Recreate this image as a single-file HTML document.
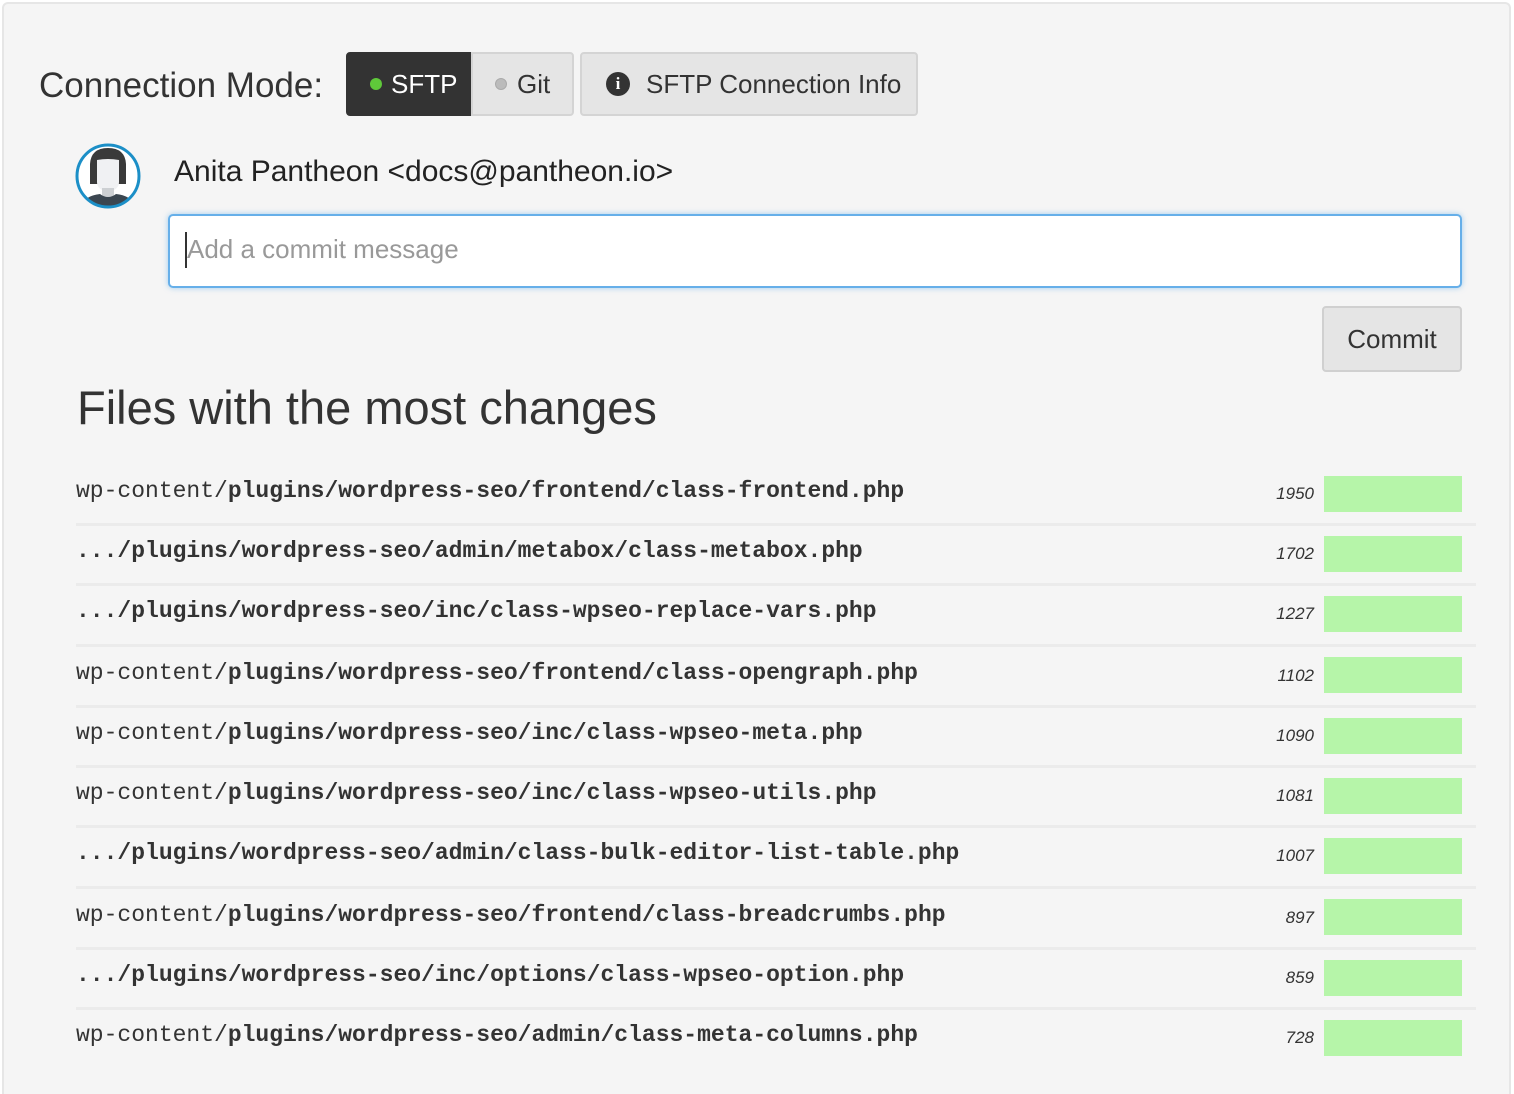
<!DOCTYPE html>
<html style="overflow:hidden;height:1094px"><head><meta charset="utf-8"><style>
*{margin:0;padding:0;box-sizing:border-box}
body{width:1514px;height:1094px;background:#fff;font-family:"Liberation Sans",sans-serif;color:#333;position:relative;overflow:hidden}
.frame{position:absolute;left:2px;top:2px;width:1509px;height:1092px;background:#f5f5f5;border:2px solid #e6e6e6;border-bottom:none;border-radius:6px 6px 0 0}
.a{position:absolute;white-space:nowrap}
.btn{position:absolute;top:52px;height:64px;border:2px solid #d4d4d4;background:#e5e5e5;font-size:26px;color:#333;display:flex;align-items:center}
.mono{font-family:"Liberation Mono",monospace;font-size:23px;color:#333}
.mono b{font-weight:bold}
.num{position:absolute;right:200px;font-style:italic;font-size:17px;color:#333}
.bar{position:absolute;left:1324px;width:138px;height:36px;background:#b6f5a9}
.sep{position:absolute;left:76px;width:1400px;height:3px;background:#ebebeb}
</style></head><body>
<div class="frame"></div>
<div class="a" style="left:39px;top:66px;font-size:35px;color:#333">Connection Mode:</div>
<div class="btn" style="left:346px;width:126px;background:#333;border-color:#333;color:#fff;border-radius:4px 0 0 4px;padding-left:22px"><span style="display:inline-block;width:12px;height:12px;border-radius:50%;background:#5fc93a;margin-right:9px"></span>SFTP</div>
<div class="btn" style="left:471px;width:103px;border-radius:0 4px 4px 0;padding-left:22px"><span style="display:inline-block;width:12px;height:12px;border-radius:50%;background:#bbb;border:1px solid #aaa;margin-right:10px"></span>Git</div>
<div class="btn" style="left:580px;width:338px;border-radius:4px;padding-left:24px"><span style="display:inline-block;width:24px;height:24px;border-radius:50%;background:#333;color:#fff;font-size:17px;font-weight:bold;text-align:center;line-height:24px;margin-right:16px;font-family:'Liberation Serif',serif">i</span>SFTP Connection Info</div>
<svg class="a" style="left:74px;top:142px" width="68" height="68" viewBox="0 0 68 68">
<defs><clipPath id="c"><circle cx="34" cy="34" r="31"/></clipPath></defs>
<circle cx="34" cy="34" r="31" fill="#fff"/>
<g clip-path="url(#c)">
<path d="M16 42 L16 22 Q17 6 34 6 Q51 6 52 22 L52 42 Z" fill="#3a3a3a"/>
<path d="M23 18 Q34 16 45 18 L45 40 Q45 48 34 50 Q23 48 23 40 Z" fill="#f0f1f3"/>
<rect x="28" y="46" width="12" height="10" fill="#cdd0d3"/>
<path d="M6 68 Q8 54 26 52 Q34 58 42 52 Q60 54 62 68 Z" fill="#3b4650"/>
</g>
<circle cx="34" cy="34" r="31" fill="none" stroke="#1c8fc7" stroke-width="3"/>
</svg>
<div class="a" style="left:174px;top:155px;font-size:30px;color:#222">Anita Pantheon &lt;docs@pantheon.io&gt;</div>
<div class="a" style="left:168px;top:214px;width:1294px;height:74px;background:#fff;border:2px solid #66afe9;border-radius:5px;box-shadow:0 0 6px rgba(102,175,233,.6)"></div>
<div class="a" style="left:185px;top:232px;width:2px;height:36px;background:#333"></div>
<div class="a" style="left:187px;top:234px;font-size:26px;color:#999">Add a commit message</div>
<div class="a" style="left:1322px;top:306px;width:140px;height:66px;background:#e5e5e5;border:2px solid #d0d0d0;border-radius:4px;font-size:26px;color:#333;text-align:center;line-height:62px">Commit</div>
<div class="a" style="left:77px;top:380px;font-size:47px;color:#333">Files with the most changes</div>

<div class="a mono" style="left:76px;top:478px">wp-content/<b>plugins/wordpress-seo/frontend/class-frontend.php</b></div>
<div class="num" style="top:484px">1950</div><div class="bar" style="top:476px"></div><div class="sep" style="top:523px"></div>

<div class="a mono" style="left:76px;top:538px"><b>.../plugins/wordpress-seo/admin/metabox/class-metabox.php</b></div>
<div class="num" style="top:544px">1702</div><div class="bar" style="top:536px"></div><div class="sep" style="top:583px"></div>

<div class="a mono" style="left:76px;top:598px"><b>.../plugins/wordpress-seo/inc/class-wpseo-replace-vars.php</b></div>
<div class="num" style="top:604px">1227</div><div class="bar" style="top:596px"></div><div class="sep" style="top:644px"></div>

<div class="a mono" style="left:76px;top:660px">wp-content/<b>plugins/wordpress-seo/frontend/class-opengraph.php</b></div>
<div class="num" style="top:666px">1102</div><div class="bar" style="top:657px"></div><div class="sep" style="top:705px"></div>

<div class="a mono" style="left:76px;top:720px">wp-content/<b>plugins/wordpress-seo/inc/class-wpseo-meta.php</b></div>
<div class="num" style="top:726px">1090</div><div class="bar" style="top:718px"></div><div class="sep" style="top:765px"></div>

<div class="a mono" style="left:76px;top:780px">wp-content/<b>plugins/wordpress-seo/inc/class-wpseo-utils.php</b></div>
<div class="num" style="top:786px">1081</div><div class="bar" style="top:778px"></div><div class="sep" style="top:825px"></div>

<div class="a mono" style="left:76px;top:840px"><b>.../plugins/wordpress-seo/admin/class-bulk-editor-list-table.php</b></div>
<div class="num" style="top:846px">1007</div><div class="bar" style="top:838px"></div><div class="sep" style="top:886px"></div>

<div class="a mono" style="left:76px;top:902px">wp-content/<b>plugins/wordpress-seo/frontend/class-breadcrumbs.php</b></div>
<div class="num" style="top:908px">897</div><div class="bar" style="top:899px"></div><div class="sep" style="top:947px"></div>

<div class="a mono" style="left:76px;top:962px"><b>.../plugins/wordpress-seo/inc/options/class-wpseo-option.php</b></div>
<div class="num" style="top:968px">859</div><div class="bar" style="top:960px"></div><div class="sep" style="top:1007px"></div>

<div class="a mono" style="left:76px;top:1022px">wp-content/<b>plugins/wordpress-seo/admin/class-meta-columns.php</b></div>
<div class="num" style="top:1028px">728</div><div class="bar" style="top:1020px"></div>
</body></html>
